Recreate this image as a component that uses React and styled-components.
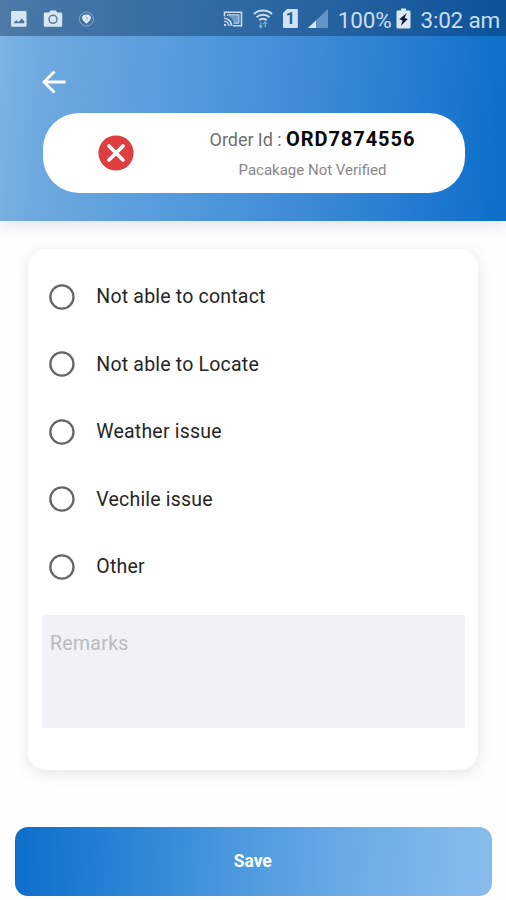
import React from "react";
import styled, { createGlobalStyle } from "styled-components";

const GlobalStyle = createGlobalStyle`
  * { box-sizing: border-box; }
  body { margin: 0; background: #fefefe; font-family: Roboto, "Noto Sans", sans-serif; }
`;

const Screen = styled.div`
  width: 506px;
  height: 900px;
  display: flex;
  flex-direction: column;
  overflow: hidden;
`;

const Header = styled.header`
  flex: none;
  height: 221px;
  background: linear-gradient(94deg, #7fb3e3 0%, #6ea9df 9%, #559bdc 35%, #3d8ad6 62%, #2079d0 85%, #0d6fca 98%);
  box-shadow: 0 3px 16px rgba(40, 60, 90, 0.16);
`;

const StatusBar = styled.div`
  height: 36px;
  padding: 1px 6px 0 9px;
  display: flex;
  align-items: center;
  justify-content: space-between;
  background: rgba(8, 40, 80, 0.4);
  color: #c9def1;
`;

const StatusGroup = styled.div`
  display: flex;
  align-items: center;
  gap: ${(p) => p.$gap}px;
`;

const StatusText = styled.span`
  font-size: 22.5px;
  line-height: 34px;
  letter-spacing: ${(p) => p.$spacing}px;
  margin-left: ${(p) => p.$left || 0}px;
  margin-top: 2px;
  white-space: nowrap;
`;

const Glyph = styled.svg`
  display: block;
  flex: none;
`;

const BackButton = styled.button`
  display: block;
  margin: 34px 0 19px 42px;
  padding: 0;
  border: 0;
  background: none;
  height: 24px;
`;

const OrderPill = styled.section`
  margin: 0 41.5px 0 42.5px;
  height: 80px;
  border-radius: 36px;
  background: #fff;
  display: grid;
  grid-template-columns: 146px 1fr;
  align-items: center;
`;

const PillIcon = styled.div`
  display: flex;
  justify-content: center;
`;

const OrderInfo = styled.div`
  display: flex;
  flex-direction: column;
  align-items: center;
  padding-right: 28px;
  color: #707070;
  white-space: nowrap;
`;

const OrderLine = styled.div`
  font-size: 18px;
  line-height: 26px;
  letter-spacing: -0.05px;
`;

const OrderNumber = styled.strong`
  color: #080808;
  font-size: 20px;
  font-weight: 700;
  letter-spacing: 0.95px;
`;

const OrderStatus = styled.div`
  font-size: 15px;
  line-height: 22px;
  margin-top: 6px;
  color: #888;
`;

const Card = styled.main`
  flex: none;
  margin: 28px 28px 0;
  height: 521px;
  padding: 14px 13.5px 0 14px;
  border-radius: 18px;
  background: #fff;
  box-shadow: 0 3px 15px rgba(60, 75, 75, 0.14);
`;

const Option = styled.label`
  height: 67.5px;
  padding-left: 7.3px;
  display: flex;
  align-items: center;
  gap: 21px;
  color: #262626;
  font-size: 19.5px;
  letter-spacing: 0.2px;
`;

const Remarks = styled.div`
  height: 113px;
  margin-top: 14.5px;
  padding: 17px 8px;
  border-radius: 2px;
  background: #f0f2f6;
  color: #b9bbbe;
  font-size: 19.5px;
  line-height: 24px;
  letter-spacing: 0.3px;
`;

const SaveButton = styled.button`
  flex: none;
  height: 69px;
  margin: 56.5px 14px 0 14.5px;
  padding: 0 1px 0 0;
  border: 0;
  border-radius: 13px;
  background: linear-gradient(92deg, #0f70cb 2%, #2581d5 20%, #4a97dd 45%, #6aabe6 70%, #86bbec 97%);
  color: #fff;
  font: 700 17.500px Roboto, sans-serif;
  letter-spacing: -0.1px;
`;

const options = ["Not able to contact", "Not able to Locate", "Weather issue", "Vechile issue", "Other"];

const RadioIcon = () => (
  <Glyph width="26" height="26" viewBox="0 0 26 26" role="radio" aria-checked="false">
    <circle cx="12.900" cy="13" r="11.600" fill="none" stroke="#666" strokeWidth="2.300" />
  </Glyph>
);

const PictureIcon = () => (
  <Glyph width="20" height="18" viewBox="0 0 20 18">
    <path fill="#d8e6f2" fillRule="evenodd" d="M3.3 1h13a1.2 1.2 0 0 1 1.2 1.2v13.4a1.2 1.2 0 0 1-1.2 1.2h-13a1.2 1.2 0 0 1-1.2-1.2V2.200A1.200 1.200 0 0 1 3.300 1ZM4.800 13.300h10.500v-2L12.800 8.600 9.500 12 7.300 10.200 4.800 12.500Z" />
  </Glyph>
);

const CameraIcon = () => (
  <Glyph width="20" height="18" viewBox="0 0 20 18">
    <path fill="#d8e6f2" d="M2 2.500h4L7.500.5h5.300l1.500 2H18a1.200 1.200 0 0 1 1.200 1.200v11.800a1.200 1.200 0 0 1-1.200 1.200H2a1.200 1.200 0 0 1-1.200-1.200V3.700A1.200 1.200 0 0 1 2 2.500Z" />
    <circle cx="10" cy="9.300" r="4" fill="none" stroke="#527fa9" strokeWidth="1.500" />
  </Glyph>
);

const BadgeIcon = () => (
  <Glyph width="18" height="16" viewBox="0 0 18 16">
    <circle cx="9.500" cy="8" r="7" fill="none" stroke="#8aabc8" strokeWidth="1" />
    <path fill="#e2edf6" d="M9.500 3.700C11.500 3 14.100 4.400 13.900 7 13.700 9.500 11 11 9.500 12.700 8 11 5.300 9.500 5.100 7 4.900 4.400 7.500 3 9.500 3.700Z" />
    <path d="M8.500 5.500 10.800 7.300 9.500 9.500" fill="none" stroke="#7ea3c5" strokeWidth=".9" />
  </Glyph>
);

const CastIcon = () => (
  <Glyph width="20" height="18" viewBox="0 0 20 18" fill="none" stroke="#c9def1" strokeWidth="1.600">
    <path d="M1.500 6.500V2.200h17v13.600H10" />
    <path d="M4.500 6V4.800h11.400v8.400h-5.200C10 9.500 8 7 4.500 6Z" fill="#6f9dca" stroke="none" />
    <path d="M1.200 8.200a8 8 0 0 1 7.600 7.800M1.200 11.200a5 5 0 0 1 4.700 4.800" />
    <path d="M4.500 6V4.800h11.400v8.400h-5" strokeWidth="1" />
    <circle cx="2" cy="15" r="1.200" fill="#c9def1" stroke="none" />
  </Glyph>
);

const WifiIcon = () => (
  <Glyph width="20" height="20" viewBox="0 0 20 20" fill="none" stroke="#c9def1" strokeWidth="2">
    <path d="M1 5C6 .4 14 .4 19 5M3.600 8.200c3.500-3.400 9.300-3.400 12.800 0M6.300 11.300c2-2 5.400-2 7.400 0" />
    <path d="M7.800 18.500v-5M5.900 16.600l1.900 2 1.500-2M12.200 13.200v5M10.300 15.100l1.900-2 1.800 2" stroke="#78a8d5" strokeWidth="1.400" />
  </Glyph>
);

const SimBadge = styled.span`
  width: 15px;
  height: 19px;
  border-radius: 1px;
  clip-path: polygon(28% 0, 100% 0, 100% 100%, 0 100%, 0 22%);
  background: #d3e3f3;
  color: #245f9c;
  font-size: 16px;
  font-weight: 700;
  line-height: 19px;
  text-align: center;
`;

const SignalIcon = () => (
  <Glyph width="20" height="20" viewBox="0 0 20 20">
    <path fill="#6395c8" d="M20 0v19H0Z" />
    <path fill="#d5e5f4" d="M8 11.500V19H0Z" />
  </Glyph>
);

const BatteryIcon = () => (
  <Glyph width="15" height="21" viewBox="0 0 15 21">
    <path fill="#dce8f3" d="M5 .5h5v2h3.200A1.300 1.300 0 0 1 14.500 3.800v15.400a1.300 1.300 0 0 1-1.300 1.300H1.800a1.300 1.300 0 0 1-1.300-1.300V3.800a1.300 1.300 0 0 1 1.300-1.300H5Z" />
    <path fill="#101d35" d="M10.800 5 3.300 11.300l3.300 1.200-1.800 5.400 7-6.800-3.200-1.200Z" />
  </Glyph>
);

export default function App() {
  return (
    <>
      <GlobalStyle />
      <Screen>
        <Header>
          <StatusBar>
            <StatusGroup $gap={14}>
              <PictureIcon />
              <CameraIcon />
              <BadgeIcon />
            </StatusGroup>
            <StatusGroup $gap={10}>
              <CastIcon />
              <WifiIcon />
              <SimBadge>1</SimBadge>
              <SignalIcon />
              <StatusGroup $gap={5}>
                <StatusText $spacing={-0.2}>100%</StatusText>
                <BatteryIcon />
                <StatusText $spacing={-0.2} $left={4}>3:02 am</StatusText>
              </StatusGroup>
            </StatusGroup>
          </StatusBar>
          <BackButton aria-label="Back">
            <Glyph width="24" height="24" viewBox="0 0 24 24" fill="none" stroke="#fff" strokeWidth="2.800">
              <path d="M23.500 12H2.500M12.500 1.500 2 12l10.500 10.500" />
            </Glyph>
          </BackButton>
          <OrderPill>
            <PillIcon>
              <Glyph width="36" height="36" viewBox="0 0 36 36">
                <circle cx="18" cy="18" r="17.600" fill="#de3e40" />
                <path d="m11 11 14 14M25 11 11 25" stroke="#fff" strokeWidth="3.800" strokeLinecap="round" />
              </Glyph>
            </PillIcon>
            <OrderInfo>
              <OrderLine>
                Order Id : <OrderNumber>ORD7874556</OrderNumber>
              </OrderLine>
              <OrderStatus>Pacakage Not Verified</OrderStatus>
            </OrderInfo>
          </OrderPill>
        </Header>
        <Card>
          {options.map((label) => (
            <Option key={label}>
              <RadioIcon />
              {label}
            </Option>
          ))}
          <Remarks role="textbox">Remarks</Remarks>
        </Card>
        <SaveButton>Save</SaveButton>
      </Screen>
    </>
  );
}
